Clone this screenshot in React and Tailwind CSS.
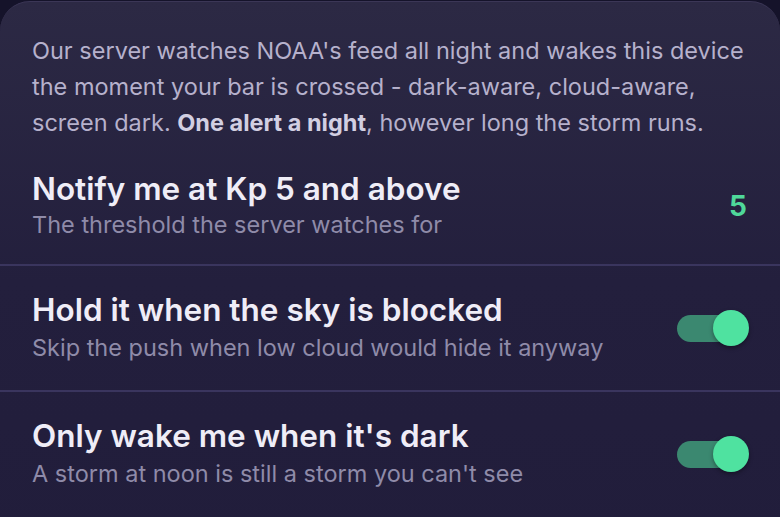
import React, { useState } from 'react'

const Toggle = ({ on, onChange }) => (
  <button
    type="button"
    onClick={onChange}
    className="relative flex h-[36px] w-[72px] shrink-0 items-center"
  >
    <span
      className={`absolute left-0 h-[27px] w-[66px] rounded-full ${on ? 'bg-[#3b8870]' : 'bg-[#3a3656]'}`}
    />
    <span
      className={`absolute h-[36px] w-[36px] rounded-full shadow-[0_2px_4px_rgba(0,0,0,0.35)] ${on ? 'left-[36px] bg-[#4fe2a0]' : 'left-0 bg-[#bdb9cf]'}`}
    />
  </button>
)

const Row = ({ title, subtitle, children, first }) => (
  <div
    className={`flex items-center justify-between pl-8 pr-[31px] ${first ? 'pt-[26px] pb-[23px]' : 'border-t-2 border-[#3a355e] pt-[26px] pb-[26px]'}`}
  >
    <div className="flex flex-col">
      <div className="text-[31.5px] font-semibold leading-[36px] text-[#efedf7]">{title}</div>
      <div className={`${first ? 'mt-[2px]' : 'mt-1'} text-[23.5px] leading-[32px] text-[#8f8ba9]`}>{subtitle}</div>
    </div>
    {children}
  </div>
)

export default function App() {
  const [cloud, setCloud] = useState(true)
  const [dark, setDark] = useState(true)

  return (
    <div className="h-[517px] w-[780px] overflow-hidden bg-[#15132a] pt-px" style={{ fontFamily: 'Inter, "Noto Sans", sans-serif' }}>
      <div className="h-[560px] rounded-t-[30px] border-t border-[#3b3656] bg-gradient-to-b from-[#2c2944] via-[#231f3d] to-[#211d3b]">
        <p className="pl-8 pr-3 pt-[31px] pb-1 text-[23.5px] leading-[36px] text-[#b6b1cc]">
          Our server watches NOAA's feed all night and wakes this device the moment your bar is crossed - dark-aware,
          cloud-aware, screen dark. <span className="font-bold text-[#d2cfe2]">One alert a night</span>, however long the
          storm runs.
        </p>

        <Row first title="Notify me at Kp 5 and above" subtitle="The threshold the server watches for">
          <span className="mr-[2px] text-[28px] font-bold text-[#4fd89a]">5</span>
        </Row>
        <Row title="Hold it when the sky is blocked" subtitle="Skip the push when low cloud would hide it anyway">
          <Toggle on={cloud} onChange={() => setCloud(!cloud)} />
        </Row>
        <Row title="Only wake me when it's dark" subtitle="A storm at noon is still a storm you can't see">
          <Toggle on={dark} onChange={() => setDark(!dark)} />
        </Row>
      </div>
    </div>
  )
}
